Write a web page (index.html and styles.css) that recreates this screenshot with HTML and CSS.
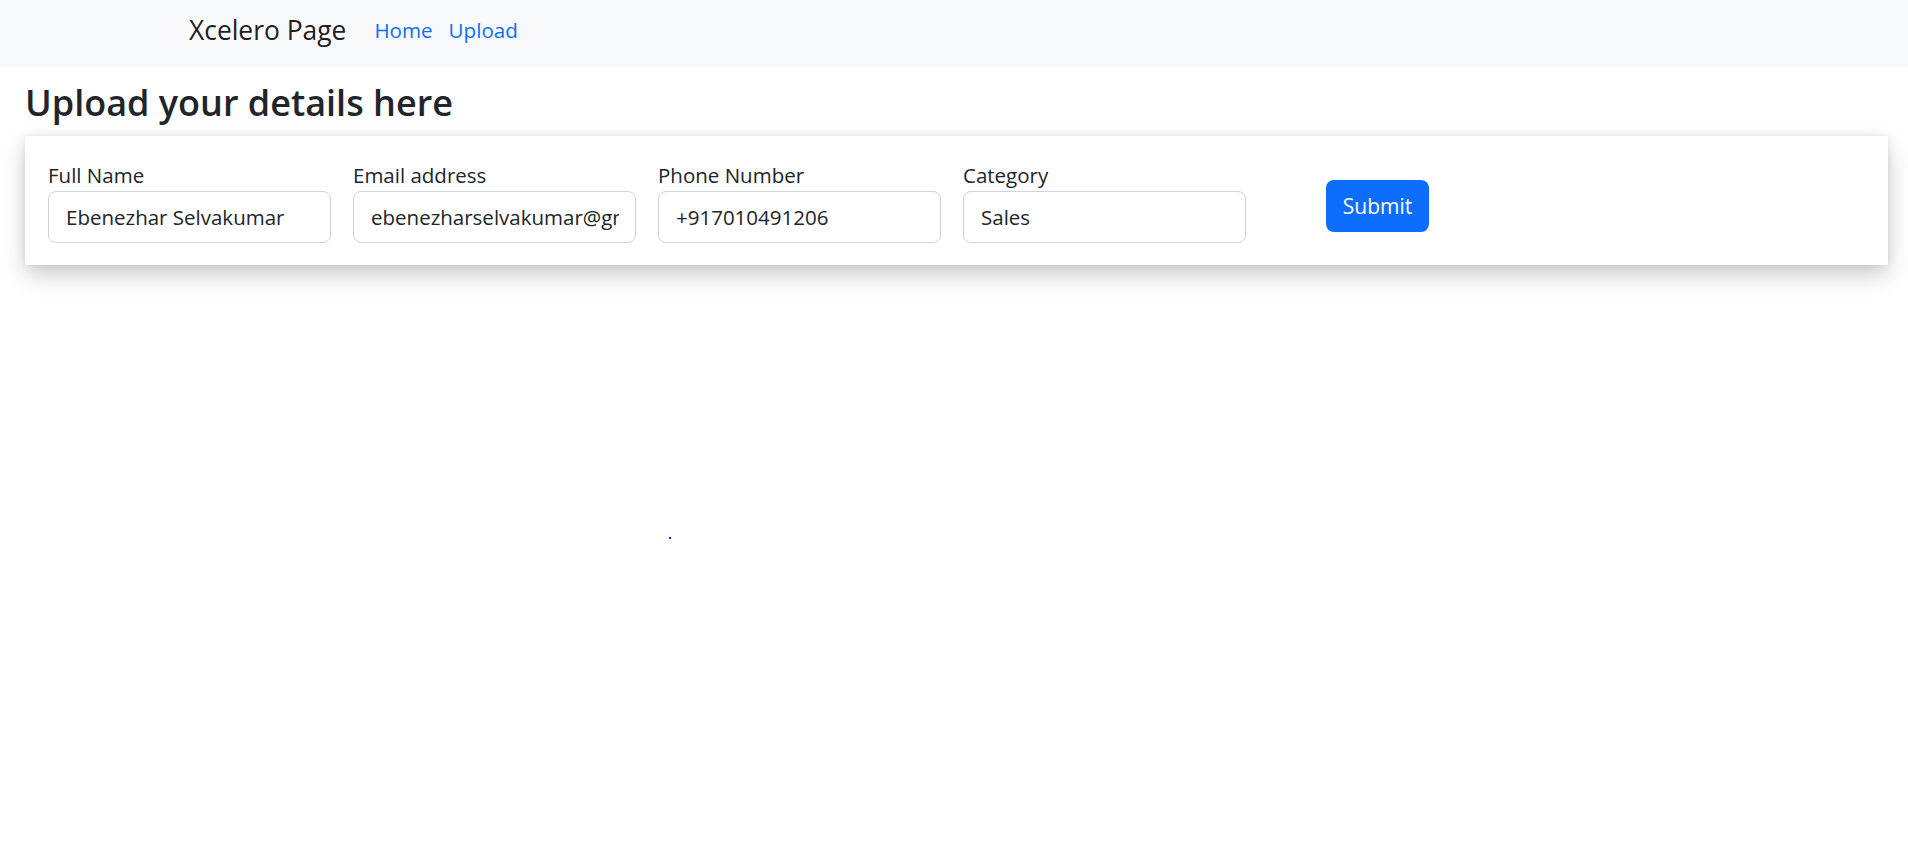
FILE: index.html
```html
<!DOCTYPE html>
<html lang="en">
<head>
<meta charset="utf-8">
<title>Xcelero Page</title>
<link rel="stylesheet" href="styles.css">
</head>
<body>
<nav class="navbar">
  <a class="brand" href="#">Xcelero Page</a>
  <ul class="nav-links">
    <li><a href="#">Home</a></li>
    <li><a href="#">Upload</a></li>
  </ul>
</nav>
<main class="page">
  <h3 class="title">Upload your details here</h3>
  <form class="card">
    <div class="field">
      <label class="label">Full Name</label>
      <input class="input" type="text" value="Ebenezhar Selvakumar">
    </div>
    <div class="field">
      <label class="label">Email address</label>
      <input class="input" type="email" value="ebenezharselvakumar@gmail.com">
    </div>
    <div class="field">
      <label class="label">Phone Number</label>
      <input class="input" type="text" value="+917010491206">
    </div>
    <div class="field">
      <label class="label">Category</label>
      <input class="input" type="text" value="Sales">
    </div>
    <button class="submit" type="button">Submit</button>
  </form>
</main>
<span class="dot"></span>
</body>
</html>
```

FILE: styles.css
```css
* { box-sizing: border-box; }

html, body {
  margin: 0;
  padding: 0;
  background: #fff;
  color: #212529;
  font-family: "Open Sans", "Noto Sans", sans-serif;
}

body {
  min-height: 100vh;
}

.navbar {
  height: 67px;
  background: #f8f9fa;
  display: flex;
  align-items: center;
  padding: 0 0 5px 189px;
}

.brand {
  font-size: 26.4px;
  line-height: 1.5;
  color: rgba(0, 0, 0, 0.9);
  text-decoration: none;
}

.nav-links {
  list-style: none;
  margin: 0 0 2px 28px;
  padding: 0;
  display: flex;
  gap: 16px;
}

.nav-links a {
  font-size: 20.6px;
  line-height: 1.5;
  color: #0d6efd;
  text-decoration: none;
}

.page {
  padding: 0 20px 40px 25px;
}

.title {
  margin: 14px 0 12px 0;
  font-size: 36px;
  line-height: 1.2;
  font-weight: 600;
  color: #212529;
}

.card {
  background: #fff;
  box-shadow: 0 10px 22px rgba(0, 0, 0, 0.2), 0 0 8px rgba(0, 0, 0, 0.08);
  padding: 24px 23px 22px 23px;
  display: flex;
  align-items: flex-start;
  gap: 22px;
}

.field {
  width: 283px;
  display: flex;
  flex-direction: column;
}

.label {
  font-size: 20.5px;
  line-height: 31px;
  color: #212529;
}

.input {
  height: 52px;
  width: 100%;
  border: 1px solid #ced4da;
  border-radius: 8px;
  padding: 0 16px 0 17px;
  font-family: inherit;
  font-size: 20.5px;
  color: #212529;
  background: #fff;
  outline: none;
}

.submit {
  margin: 20px 0 0 58px;
  width: 103px;
  height: 52px;
  border: none;
  border-radius: 8px;
  background: #0d6efd;
  color: #fff;
  font-family: inherit;
  font-size: 21px;
  padding: 0;
}

.dot {
  position: absolute;
  left: 669px;
  top: 537px;
  width: 2px;
  height: 2px;
  background: #1a1aff;
}
```
